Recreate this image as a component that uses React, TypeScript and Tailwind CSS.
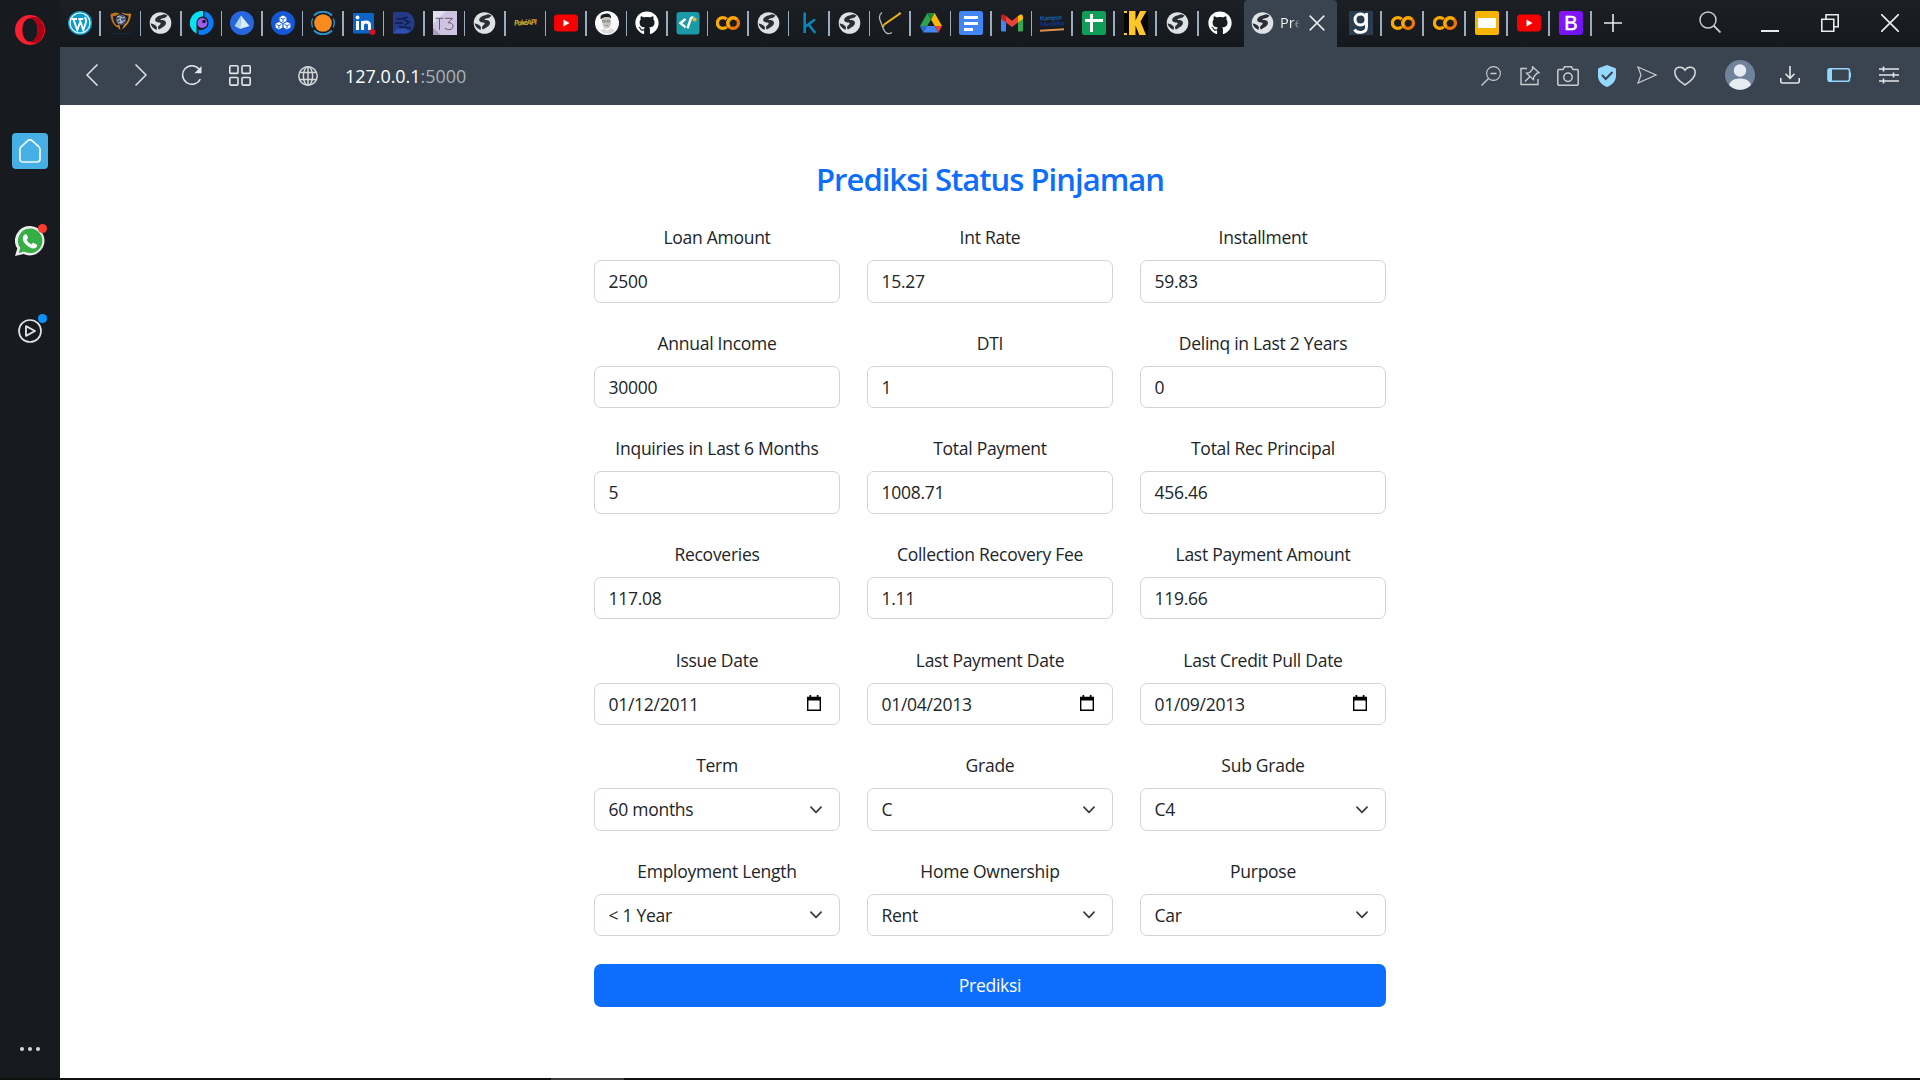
import type { ReactNode } from "react";
import { FaGithub } from "react-icons/fa";

const Svg = ({ children, vb = "0 0 24 24", className = "size-6" }: { children: ReactNode; vb?: string; className?: string }) => (
  <svg viewBox={vb} className={className} fill="none">
    {children}
  </svg>
);

/* ---------- tab icons ---------- */

const Globe = () => (
  <Svg>
    <circle cx="11.500" cy="12" r="10.800" fill="#dfe2e4" />
    <path
      d="M18.500 4.500L15.500 3.200C12 4.200 8 5 6.500 7.500c-1 2.200.5 3.800 3 4 1.500.1 2.500.2 2 1.500-.5 1-2.500 1.500-2.500 3.500 0 .8.300 1.500.8 2 2.700-1.500 7.200-3.500 7.200-6.500 0-2.500-2.500-3-5-3-.8-.3-.5-1 .5-1.300 2.500-.7 5-1 6-3.200z"
      fill="#2a2f35"
    />
    <path d="M1.500 12.500c2.500.3 5 1.200 6.500 3.700l-.5 2.800C4.500 17.500 2.500 16 1.500 12.500z" fill="#2a2f35" />
  </Svg>
);

const Wordpress = () => (
  <Svg>
    <circle cx="12" cy="12" r="12" fill="#0c9ccc" />
    <circle cx="12" cy="12" r="10" stroke="#fff" strokeWidth="1.200" />
    <path d="M3.500 8h5.500M10.300 8h5M5.300 8l4 11L12 11.500M11.500 8L15.300 19l2.700-8c.8-2.500-1-3.300-.8-5" stroke="#fff" strokeWidth="1.900" />
  </Svg>
);

const Shield = () => (
  <Svg>
    <path d="M6 1.500C4 2.500 2.500 2.700 1.500 2.700c0 7 3 11.300 7 14.300l-1.500-3.500C4.800 11.500 4 8 4 5.300 6 5.300 9 4 11 2.500z" fill="#b87320" />
    <path d="M13 1.500c3 1.500 6 1.500 9 1-.3 7-3.500 12-9 16l2-4.500c3.600-2.700 4.500-5.500 4.600-9.500-2.600 0-5-1-7-2.500z" fill="#d98a25" />
    <path d="M7 14l4.500 5.500-1-5.500z" fill="#c9821f" />
    <circle cx="12" cy="8.700" r="5.300" fill="#4a5676" />
    <path d="M8 6l3-1 2 2 3-1M8 10l3-2 2 3 3-2M11 5l1 8M9 12l5-1" stroke="#b4bbcc" />
    <path d="M2 22.500h20" stroke="#14243a" strokeWidth="1.500" />
  </Svg>
);

const PurpleP = () => (
  <Svg>
    <path d="M13 0A12 12 0 0 0 6.500 22.700V12A6 6 0 0 1 13 5.600z" fill="#06e2f4" />
    <path d="M14.500.2A12 12 0 0 1 8.500 23.500V18.500c1.500 1 7.500.5 9.500-4C19.500 9.500 17 6.500 14.500 5.800z" fill="#0a7cf8" />
    <circle cx="12.300" cy="12" r="5" fill="#a05cec" />
    <circle cx="14" cy="10.500" r="1.800" fill="#15181d" />
  </Svg>
);

const Prism = () => (
  <Svg>
    <circle cx="12" cy="12" r="12" fill="#2766dd" />
    <path d="M11 4.500L4.500 15l5.500 3z" fill="#a9d5ed" />
    <path d="M11 4.500L10 18l9.500-3z" fill="#dcecf6" />
  </Svg>
);

const Cubes = () => (
  <Svg>
    <circle cx="12" cy="12" r="12" fill="#1557d5" />
    {["translate(12 8.200)", "translate(8 14.700)", "translate(16 14.700)"].map((t) => (
      <g key={t} transform={t}>
        <path d="M0-3.700L3.400-1.900V1.900L0 3.700-3.400 1.900v-3.800z" fill="#fff" />
        <path d="M-2.500-1.300L0 0l2.500-1.300M0 0v3" stroke="#1557d5" strokeWidth=".9" />
      </g>
    ))}
  </Svg>
);

const OrangeRing = () => (
  <Svg>
    <circle cx="12" cy="12" r="8.800" fill="#f68b1f" />
    <path d="M3 4.500c5-5 13-5 18 0M3 19.500c5 5 13 5 18 0" stroke="#2f93cc" strokeWidth="2" />
    <path d="M1.700 7.500a11 11 0 0 0 0 9M22.300 7.500a11 11 0 0 1 0 9" stroke="#2f93cc" strokeWidth="1.300" />
  </Svg>
);

const Linkedin = () => (
  <Svg>
    <rect x="1" y="2" width="21" height="20.500" rx="1" fill="#0a66c2" />
    <path d="M5.500 10v9M10.500 10v9M10.500 14c0-4 7-4 7 0v5" stroke="#fff" strokeWidth="3" />
    <circle cx="5.500" cy="6.500" r="1.900" fill="#fff" />
    <circle cx="20.500" cy="21" r="3" fill="#d11124" />
  </Svg>
);

const LetterD = () => (
  <Svg>
    <path d="M1 1h12c6 0 9.500 5 9.500 11S19 22.500 13 22.500H1z" fill="#233a87" />
    <path d="M1 22.500l4-5h8l5 3c-1.500 1.500-3 2-5 2z" fill="#2d4fae" />
    <path d="M4 8h6l3-1.500h3M3 12h8M7 16h5l4 1h3M12 8.500l5 2.500-4 3" stroke="#121c48" strokeWidth="1.500" />
  </Svg>
);

const T3 = () => (
  <Svg>
    <path d="M0 0h24v24H0z" fill="#cfc3e2" />
    <path d="M0 0h13L0 13z" fill="#e4ddee" />
    <path d="M0 17l8 7H0z" fill="#a99bb9" />
    <path d="M2.500 7.300h8M6.500 7.300v11.500M12 7.300h7.500l-4.500 4.500c3-.4 5 1 5 3.300 0 4-5.500 4.500-8 2" stroke="#62596f" strokeWidth="1" />
  </Svg>
);

const Pokeapi = () => (
  <div className="flex size-6 items-center justify-center">
    <span className="-rotate-3 font-['Lato'] text-[7.500px] leading-none font-black tracking-[-0.700px] whitespace-nowrap text-[#cdb32c] italic">PokéAPI</span>
  </div>
);

const Youtube = () => (
  <Svg>
    <rect y="3.500" width="24" height="17" rx="3.500" fill="#f90000" />
    <path d="M9.500 8.500l6 3.500-6 3.500z" fill="#fff" />
  </Svg>
);

const Face = () => (
  <Svg>
    <circle cx="12" cy="12" r="12" fill="#fafafa" />
    <path d="M6 8.500C4.500 4.500 7 3 10.500 2.700c4-.7 6 1.500 5.500 5.300l-1-1.500c-3-.5-5.500-.5-7.500.5z" fill="#1c1c1c" />
    <path d="M7 7.500c3-1.500 5-1.500 8-.5l1 6c-.8 3-2 4.500-4.500 4.500S8 15.500 7.500 13z" fill="#c4c4c4" />
    <path d="M7.500 9.500h3v1.600h-3zM12 9.500h3v1.600h-3zM10.500 14.500h3" stroke="#777" strokeWidth=".7" />
    <path d="M5 19.500c1.500-1 3-1 4-2.500l3 3 3.500-3c1.500 1.200 3 1.500 4.500 3a11.500 11.500 0 0 1-15-.5z" fill="#dcdcdc" />
  </Svg>
);

const Github = () => <FaGithub className="size-6 text-white" />;

const CodeR = () => (
  <Svg>
    <rect x=".500" y="1" width="23" height="22.500" rx="3" fill="#1a9aa6" />
    <path d="M9.500 8l-5 4 5 4.300M11.500 17.300l3.300-9.800c.4-1 1.500-1.300 2.500-1" stroke="#fff" strokeWidth="2.400" />
    <circle cx="18.600" cy="8.500" r="2" fill="#f3b53a" />
  </Svg>
);

const Colab = () => (
  <Svg>
    <path d="M10.600 8.200a5.400 5.400 0 1 0 0 7.600" stroke="#f9ab00" strokeWidth="3.300" />
    <circle cx="17" cy="12" r="5.400" stroke="#ed750a" strokeWidth="3.300" />
    <path d="M13.200 15.800a5.400 5.400 0 0 1 7.600-7.600" stroke="#f9ab00" strokeWidth="3.300" />
  </Svg>
);

const SmallK = () => (
  <Svg>
    <path d="M7.700 1.500v20.500M18 8.500l-9.500 7M11.500 13.500l6.800 8.500" stroke="#0a86b8" strokeWidth="2.600" />
  </Svg>
);

const Bow = () => (
  <Svg>
    <path d="M4 1.500C1 3.500.800 5.500 2 9l3 8c1.500 4 4 7.500 9 4.500" stroke="#b4b8bc" strokeWidth="1.300" />
    <path d="M5.500 14L22 2.500" stroke="#edb90f" strokeWidth="2" />
    <path d="M4.500 14l1.500 2M21 1.500l2 1.500" stroke="#edb90f" strokeWidth="1.400" />
  </Svg>
);

const Drive = () => (
  <Svg>
    <path d="M8.300 2L1 15l3.500 6.500L12 8.500z" fill="#2ba24c" />
    <path d="M8.300 2h7.400L12 8.500z" fill="#178a3d" />
    <path d="M15.700 2L23 15h-7.300L12 8.500z" fill="#fbb605" />
    <path d="M1 15h7.300l-3.800 6.500z" fill="#2a67d0" />
    <path d="M8.300 15h7.400l3.800 6.500h-15z" fill="#4285f4" />
    <path d="M15.700 15H23l-3.500 6.500z" fill="#ea4335" />
  </Svg>
);

const Docs = () => (
  <Svg>
    <rect width="24" height="24" rx="2.500" fill="#4285f4" />
    <path d="M5 6.500h14M5 12.500h14M5 18.500h9" stroke="#fff" strokeWidth="2.800" />
  </Svg>
);

const Gmail = () => (
  <Svg>
    <path d="M1 7l5 4v9.500H2.500C1.700 20.500 1 20 1 19z" fill="#4285f4" />
    <path d="M23 7l-5 4v9.500h3.500c.8 0 1.500-.5 1.500-1.500z" fill="#34a853" />
    <path d="M6 5l6 4.800L18 5v6.500L12 16l-6-4.500z" fill="#ea4335" />
    <path d="M1 6c0-3 2.500-3.500 5-1v6.500L1 8z" fill="#c5221f" />
    <path d="M23 6c0-3-2.500-3.500-5-1v6.500L23 8z" fill="#fbbc04" />
  </Svg>
);

const Kampus = () => (
  <div className="flex size-6 flex-col justify-center">
    <div className="-rotate-4 font-['Lato'] text-[6.500px] leading-[6px] font-black tracking-[-0.300px]">
      <div className="text-[#1b5ea4]">Kampus</div>
      <div className="text-[#0c3490]">Merdeka</div>
    </div>
    <div className="mt-0.5 h-[1.500px] w-6 -rotate-4 bg-[#dd9250]" />
  </div>
);

const Sheets = () => (
  <Svg>
    <rect width="24" height="24" rx="2.500" fill="#0f9d58" />
    <path d="M3 9.500h18M9.500 3v18" stroke="#fff" strokeWidth="3" />
  </Svg>
);

const BigK = () => (
  <Svg>
    <path d="M0 0h24v24H0z" fill="#060606" />
    <path d="M0 0h3v2H0zM0 22h3v2H0z" fill="#ffc627" />
    <path d="M5 0h6.500v9.500L16 0h6.500l-6 10.500L22 24h-6.700l-3.800-9.500V24H5z" fill="#ffc627" />
  </Svg>
);

const GTile = () => (
  <Svg>
    <path d="M0 0h24v24H0z" fill="#2b3c4f" />
    <circle cx="11.500" cy="8.500" r="5.500" stroke="#fff" strokeWidth="3" />
    <path d="M17.500 2v14c0 7-10 6.500-12 2.500" stroke="#fff" strokeWidth="2.800" />
  </Svg>
);

const Slides = () => (
  <Svg>
    <rect width="24" height="24" rx="2" fill="#f8b500" />
    <path d="M3 7h18v10H3z" fill="#fff" />
  </Svg>
);

const Bootstrap = () => (
  <div className="flex size-6 items-center justify-center rounded-[3px] bg-gradient-to-br from-[#8c14fb] to-[#6a12f0] font-['Liberation_Sans'] text-[20px] leading-none font-normal text-white">
    <span className="[-webkit-text-stroke:0.5px_white]">B</span>
  </div>
);

const leftTabs = [Wordpress, Shield, Globe, PurpleP, Prism, Cubes, OrangeRing, Linkedin, LetterD, T3, Globe, Pokeapi, Youtube, Face, Github, CodeR, Colab, Globe, SmallK, Globe, Bow, Drive, Docs, Gmail, Kampus];
const midTabs = [Sheets, BigK, Globe, Github];
const rightTabs = [GTile, Colab, Colab, Slides, Youtube, Bootstrap];

const WideTab = ({ icon: Icon, divider = true }: { icon: () => ReactNode; divider?: boolean }) => (
  <div className="flex w-[42px] shrink-0 items-center justify-between pl-[9.250px]">
    <Icon />
    {divider && <span className="h-[25px] w-[1.500px] bg-[#9aabbd]" />}
  </div>
);

const TabBar = () => (
  <div className="flex h-[47px] bg-gradient-to-b from-[#1c1f24] to-[#15181c] pl-[0.250px]">
    <div className="flex h-[46px]">
      {leftTabs.map((Icon, i) => (
        <div key={i} className="flex w-[40.500px] shrink-0 items-center justify-between pl-[7.750px]">
          <Icon />
          <span className="h-[25px] w-[1.500px] bg-[#9aabbd]" />
        </div>
      ))}
      {midTabs.map((Icon, i) => (
        <WideTab key={i} icon={Icon} divider={i < 3} />
      ))}
    </div>
    <div className="ml-[3.250px] flex h-[47px] w-[93px] items-center rounded-t bg-[#3a4450] pb-px pl-[7px]">
      <Globe />
      <span className="ml-[5px] w-[26px] bg-gradient-to-r from-white from-[12px] to-transparent to-[20px] bg-clip-text pb-px font-['Open_Sans'] text-[14.500px] whitespace-nowrap text-transparent">Pre</span>
      <Svg className="ml-[3px] size-4">
        <path d="M1 1l22 22M23 1L1 23" stroke="#e8eaec" strokeWidth="2.300" />
      </Svg>
    </div>
    <div className="ml-[2.750px] flex h-[46px]">
      {rightTabs.map((Icon, i) => (
        <WideTab key={i} icon={Icon} />
      ))}
    </div>
    <div className="flex h-[46px] grow items-center">
      <Svg vb="0 0 18 18" className="ml-[12px] size-[18px]">
        <path d="M9 0v18M0 9h18" stroke="#e8eaec" strokeWidth="1.600" />
      </Svg>
      <Svg vb="0 0 22 22" className="mb-[2px] ml-[77px] size-[22px]">
        <circle cx="9" cy="9" r="8" stroke="#c9ccce" strokeWidth="1.500" />
        <path d="M14.500 14.500l7 7" stroke="#c9ccce" strokeWidth="1.800" />
      </Svg>
      <span className="mt-[16px] ml-[40px] h-[2px] w-[18px] bg-[#e8eaec]" />
      <Svg vb="0 0 18 18" className="ml-[42px] size-[18px]">
        <path d="M.800 5.300h12v11.900H.800zM5 5V.800h12.200v12H13" stroke="#e8eaec" strokeWidth="1.600" />
      </Svg>
      <Svg vb="0 0 18 18" className="ml-[42px] size-[18px]">
        <path d="M0 0l18 18M18 0L0 18" stroke="#e8eaec" strokeWidth="1.700" />
      </Svg>
    </div>
  </div>
);

/* ---------- address bar ---------- */

const AddressBar = () => (
  <div className="flex h-[58px] items-center bg-[#3a4450] pb-[2px]">
    <Svg vb="0 0 12 22" className="ml-[26px] h-[22px] w-3">
      <path d="M11.500.500L1 11l10.500 10.500" stroke="#e3e5e7" strokeWidth="1.500" />
    </Svg>
    <Svg vb="0 0 12 22" className="ml-[37px] h-[22px] w-3">
      <path d="M.500.500L11 11 .500 21.500" stroke="#e3e5e7" strokeWidth="1.500" />
    </Svg>
    <Svg vb="0 0 21 21" className="ml-[33.500px] size-[21px]">
      <path d="M18.300 4.300A9.300 9.300 0 1 0 19.300 14" stroke="#e3e5e7" strokeWidth="1.500" />
      <path d="M20.500 1v7.200h-7z" fill="#e3e5e7" />
    </Svg>
    <Svg vb="0 0 22 21" className="ml-[27.500px] h-[21px] w-[22px]">
      <g stroke="#e3e5e7" strokeWidth="1.600">
        <rect x=".800" y=".800" width="8.200" height="7.600" rx="1" />
        <rect x="13" y=".800" width="8.200" height="7.600" rx="1" />
        <rect x=".800" y="12.500" width="8.200" height="7.600" rx="1" />
        <rect x="13" y="12.500" width="8.200" height="7.600" rx="1" />
      </g>
    </Svg>
    <Svg vb="0 0 20 20" className="mt-[2px] ml-[47px] size-5">
      <g stroke="#d5d8da" strokeWidth="1.500">
        <circle cx="10" cy="10" r="9.200" />
        <ellipse cx="10" cy="10" rx="4.600" ry="9.200" />
        <path d="M10 .500v19M1.500 6.500h17M1.500 13.500h17" />
      </g>
    </Svg>
    <span className="mt-[2px] ml-[27px] font-['Open_Sans'] text-[18px] leading-6 tracking-[-0.050px] text-white">
      127.0.0.1<span className="text-[#a8b0b9]">:5000</span>
    </span>
    <div className="ml-auto flex items-center">
      <Svg vb="0 0 20 20" className="mt-[2px] size-5">
        <circle cx="12.500" cy="7.500" r="6.900" stroke="#c9ccce" strokeWidth="1.100" />
        <path d="M7.500 12.500L.500 19.500M9.500 7.500h6" stroke="#c9ccce" strokeWidth="1.400" />
      </Svg>
      <Svg vb="0 0 20 20" className="mt-[2px] ml-[19px] size-5">
        <path d="M7 2.500H1v16h17V13" stroke="#c9ccce" strokeWidth="1.400" />
        <path d="M12.500.800l6.500 6-2 .400-3.200 3.500-.3 3-7-6.600 3-.4 3.200-3.700zM10 10.500l-5 5" stroke="#c9ccce" strokeWidth="1.300" />
      </Svg>
      <Svg vb="0 0 22 20" className="mt-[2px] ml-[17px] h-5 w-[22px]">
        <path d="M.800 4.500c0-.6.300-1 1-1H6L7.500.800h7L16 3.500h4.200c.7 0 1 .4 1 1V18c0 .7-.3 1.200-1 1.200H1.800c-.7 0-1-.5-1-1.200z" stroke="#c9ccce" strokeWidth="1.500" />
        <circle cx="11" cy="11.300" r="4.200" stroke="#c9ccce" strokeWidth="1.500" />
      </Svg>
      <Svg vb="0 0 18 22" className="mt-[2px] ml-[19px] h-[22px] w-[18px]">
        <path d="M9 0l8 3c.7.200 1 .6 1 1.200V11c0 5-4 9-9 11-5-2-9-6-9-11V4.200C0 3.600.300 3.200 1 3z" fill="#94d8ff" />
        <path d="M4 10l3.700 4L14.500 7" stroke="#3a4450" strokeWidth="2" />
      </Svg>
      <Svg vb="0 0 20 18" className="ml-[21px] h-[18px] w-5">
        <path d="M1 1l18 8L1 17l3-8z" stroke="#c9ccce" strokeWidth="1.200" />
      </Svg>
      <Svg vb="0 0 22 20" className="mt-[2px] ml-[17px] h-5 w-[22px]">
        <path d="M11 19C8 17 .800 12.500.800 6.500.800 1 8 -1 11 4.200 14-1 21.200 1 21.200 6.500c0 6-7.200 10.500-10.200 12.500z" stroke="#d9dcde" strokeWidth="1.500" />
      </Svg>
      <Svg vb="0 0 30 30" className="ml-[29px] size-[30px]">
        <circle cx="15" cy="15" r="15" fill="#70839a" />
        <circle cx="15" cy="10.500" r="6.200" fill="#e6ecf2" />
        <path d="M4 25c1-4.500 6-6.500 11-6.500S25 20.500 26 25a15 15 0 0 1-22 0z" fill="#e6ecf2" />
      </Svg>
      <Svg vb="0 0 20 18" className="ml-[25px] h-[18px] w-5">
        <path d="M10 0v12M5.500 7.800l4.500 4.500 4.500-4.500M.800 12v3.500c0 1 .7 1.500 1.500 1.500h15.400c.8 0 1.500-.5 1.500-1.500V12" stroke="#e3e5e7" strokeWidth="1.600" />
      </Svg>
      <Svg vb="0 0 24 14" className="ml-[27px] h-[14px] w-6">
        <rect x="1" y=".800" width="21.500" height="12.400" rx="2" stroke="#94d8ff" strokeWidth="1.600" />
        <path d="M1 1h4v12H1zM22.500 4.500h1.500v5h-1.500z" fill="#94d8ff" />
      </Svg>
      <Svg vb="0 0 20 18" className="mr-[21px] ml-[28px] h-[18px] w-5">
        <path d="M0 3h20M0 9h20M0 15h20M4.500.500v5M14.500 6.500v5M4.500 12.500v5" stroke="#e3e5e7" strokeWidth="1.600" />
      </Svg>
    </div>
  </div>
);

/* ---------- sidebar ---------- */

const Sidebar = () => (
  <aside className="flex w-[60px] shrink-0 flex-col items-center bg-[#171b20] pt-[15px]">
    <Svg vb="0 0 30 30" className="size-[30px]">
      <path fillRule="evenodd" d="M15 0a15 15 0 1 0 0 30 15 15 0 0 0 0-30zm0 3.200c4.300 0 7.600 5 7.600 11.800S19.300 26.800 15 26.800 7.400 21.800 7.400 15 10.700 3.200 15 3.200z" fill="#fa1e30" />
      <path d="M15 3.200c2-1.500 5-1.500 8-.4a15 15 0 0 1 0 24.400c-3 1.200-6 1-8-.4 4.300 0 7.600-5 7.600-11.800S19.300 3.200 15 3.200z" fill="#b00012" />
    </Svg>
    <div className="mt-[87.500px] flex size-9 items-center justify-center rounded-[4px] bg-[#45afe6]">
      <Svg vb="0 0 22 24" className="mt-px h-6 w-[22px]">
        <path d="M8.800 1.600c1.300-1 3-1 4.300 0l6.600 6c1 .900 1.300 1.500 1.300 2.700V20c0 2-1 3-3 3H4c-2 0-3-1-3-3v-9.700c0-1.200.3-1.800 1.300-2.700z" stroke="#f1f8fc" strokeWidth="1.700" />
      </Svg>
    </div>
    <div className="relative mt-[57.500px] size-[30px]">
      <Svg vb="0 0 30 30" className="size-[30px]">
        <path d="M15 0a14.700 14.700 0 1 1-6.500 28L0 30l2.300-7.500A14.700 14.700 0 0 1 15 0z" fill="#ececec" />
        <path d="M15 2.500a12.300 12.300 0 1 1-6 23L3.800 27l1.500-5A12.300 12.300 0 0 1 15 2.500z" fill="#36ae46" />
        <path d="M10.500 8.300c.8-.2 1.200.3 1.600 1.300l.8 2c.3 1-.8 1.500-1.200 2.200.8 2.200 2.500 3.600 4.800 4.600.8-.5 1.200-1.800 2.200-1.500l3 1.500c.8.500.5 2-.5 3-2.500 2-6 .7-9-1.600-3-2.500-5-5.500-4.300-8.500.3-1.500 1.300-2.800 2.600-3z" fill="#fff" />
      </Svg>
      <span className="absolute -top-[2px] -right-[2px] size-[9px] rounded-full bg-[#fe3b30]" />
    </div>
    <div className="relative mt-[63px] size-6">
      <Svg>
        <circle cx="12" cy="12" r="11" stroke="#dfe2e4" strokeWidth="1.700" />
        <path d="M8 7.200v9.600l9-4.800z" stroke="#dfe2e4" strokeWidth="1.900" strokeLinejoin="round" />
      </Svg>
      <span className="absolute -top-[5px] -right-[5px] size-[9px] rounded-full bg-[#0a94ff]" />
    </div>
    <div className="mt-auto mb-[27px] flex gap-1">
      <span className="size-1 rounded-full bg-[#d6d8da]" />
      <span className="size-1 rounded-full bg-[#d6d8da]" />
      <span className="size-1 rounded-full bg-[#d6d8da]" />
    </div>
  </aside>
);

/* ---------- loan form ---------- */

type Kind = "text" | "date" | "select";

const fields: [string, string, Kind][] = [
  ["Loan Amount", "2500", "text"],
  ["Int Rate", "15.27", "text"],
  ["Installment", "59.83", "text"],
  ["Annual Income", "30000", "text"],
  ["DTI", "1", "text"],
  ["Delinq in Last 2 Years", "0", "text"],
  ["Inquiries in Last 6 Months", "5", "text"],
  ["Total Payment", "1008.71", "text"],
  ["Total Rec Principal", "456.46", "text"],
  ["Recoveries", "117.08", "text"],
  ["Collection Recovery Fee", "1.11", "text"],
  ["Last Payment Amount", "119.66", "text"],
  ["Issue Date", "01/12/2011", "date"],
  ["Last Payment Date", "01/04/2013", "date"],
  ["Last Credit Pull Date", "01/09/2013", "date"],
  ["Term", "60 months", "select"],
  ["Grade", "C", "select"],
  ["Sub Grade", "C4", "select"],
  ["Employment Length", "< 1 Year", "select"],
  ["Home Ownership", "Rent", "select"],
  ["Purpose", "Car", "select"],
];

const Field = ({ label, value, kind }: { label: string; value: string; kind: Kind }) => (
  <div>
    <div className="mb-[9px] text-center leading-[27px]">{label}</div>
    <div className="flex h-[42.500px] items-center justify-between rounded-[7px] border border-[#ced4da] px-[13.500px]">
      <span>{value}</span>
      {kind === "date" && (
        <Svg vb="0 0 14 16" className="mr-[5px] mb-px h-4 w-[14px]">
          <path d="M.700 2.500h12.600v12.800H.700z" stroke="#000" strokeWidth="1.400" />
          <path d="M0 2h14v3.500H0zM2.500 0h1.700v3H2.500zM9.800 0h1.700v3H9.800z" fill="#000" />
        </Svg>
      )}
      {kind === "select" && (
        <Svg vb="0 0 16 16" className="mr-[1px] h-[13.500px] w-[18px]">
          <path d="M2 5l6 6 6-6" stroke="#343a40" strokeWidth="2" strokeLinecap="round" strokeLinejoin="round" />
        </Svg>
      )}
    </div>
  </div>
);

const LoanForm = () => (
  <main className="flex grow flex-col items-center bg-white pt-[55px] font-['Open_Sans','Noto_Sans',sans-serif] text-[17.500px] tracking-[-0.270px] text-[#212529]">
    <h1 className="mb-[26px] text-[31px] leading-[38px] font-semibold tracking-[-0.980px] text-[#0d6efd]">Prediksi Status Pinjaman</h1>
    <form className="w-[792px]">
      <div className="grid grid-cols-3 gap-x-[27px] gap-y-[27.170px]">
        {fields.map(([label, value, kind]) => (
          <Field key={label} label={label} value={value} kind={kind} />
        ))}
      </div>
      <button type="button" className="mt-[27.500px] h-[43px] w-full rounded-[7px] bg-[#0d6efd] text-white">
        Prediksi
      </button>
    </form>
  </main>
);

export default function App() {
  return (
    <div className="flex h-[1080px] w-[1920px] flex-col overflow-hidden">
      <div className="flex grow">
        <Sidebar />
        <div className="flex w-[1860px] flex-col">
          <TabBar />
          <AddressBar />
          <LoanForm />
        </div>
      </div>
      <div className="h-[2px] bg-[#101010] pl-[551px]">
        <div className="h-full w-[73px] bg-[#3a3a3a]" />
      </div>
    </div>
  );
}
